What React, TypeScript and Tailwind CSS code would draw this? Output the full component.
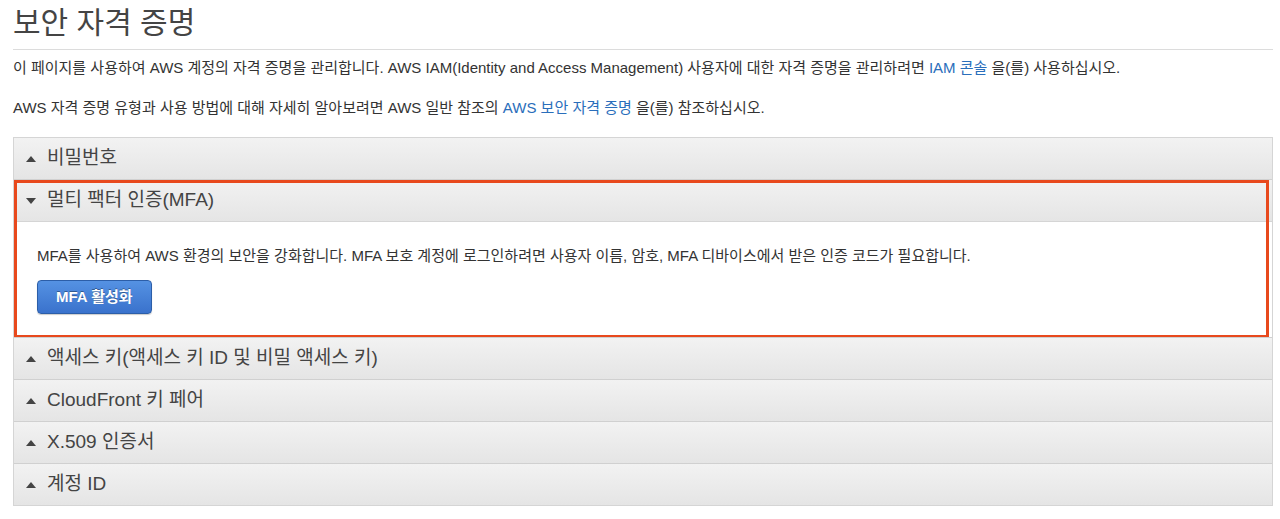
import { useState } from 'react';

const font = { fontFamily: '"Liberation Sans", "Noto Sans CJK KR", sans-serif' };

const sections = [
    { id: 'password', title: '비밀번호' },
    { id: 'mfa', title: '멀티 팩터 인증(MFA)' },
    { id: 'keys', title: '액세스 키(액세스 키 ID 및 비밀 액세스 키)' },
    { id: 'cloudfront', title: 'CloudFront 키 페어' },
    { id: 'x509', title: 'X.509 인증서' },
    { id: 'account', title: '계정 ID' },
];

function Caret({ open }: { open: boolean }) {
    return (
        <svg width="10" height="6" viewBox="0 0 10 6" className="shrink-0">
            {open ? (
                <polygon points="0,0 10,0 5,6" fill="#444" />
            ) : (
                <polygon points="0,6 10,6 5,0" fill="#444" />
            )}
        </svg>
    );
}

export default function App() {
    const [open, setOpen] = useState('mfa');

    return (
        <main className="bg-white px-[13px] pt-[3px] text-[#333] w-[1280px] h-[519px] overflow-hidden" style={font}>
            <h1 className="text-[30px] leading-[40px] text-[#444] font-normal">보안 자격 증명</h1>
            <div className="mt-[6px] border-t border-[#dcdcdc] mr-[-6px]" />

            <p className="mt-[8px] text-[15px] leading-[20px]">
                이 페이지를 사용하여 AWS 계정의 자격 증명을 관리합니다. AWS IAM(Identity and Access Management) 사용자에 대한 자격 증명을 관리하려면{' '}
                <a className="text-[#2a6ebb]">IAM 콘솔</a> 을(를) 사용하십시오.
            </p>
            <p className="mt-[20px] text-[15px] leading-[20px]">
                AWS 자격 증명 유형과 사용 방법에 대해 자세히 알아보려면 AWS 일반 참조의{' '}
                <a className="text-[#2a6ebb]">AWS 보안 자격 증명</a> 을(를) 참조하십시오.
            </p>

            {/* 아코디언 */}
            <div className="mt-[19px] border border-[#d5d5d5] mr-[-6px]">
                {sections.map((s, i) => {
                    const isOpen = open === s.id;
                    return (
                        <div
                            key={s.id}
                            className={`relative ${i > 0 ? 'border-t border-[#d0d0d0]' : ''}`}
                        >
                            <button
                                onClick={() => setOpen(isOpen ? '' : s.id)}
                                className="w-full h-[41px] flex items-center gap-[11px] pl-[12px] bg-gradient-to-b from-[#f2f2f2] to-[#e5e5e5] text-left text-[19px] text-[#444] cursor-pointer"
                            >
                                <Caret open={isOpen} />
                                <span>{s.title}</span>
                            </button>

                            {isOpen && s.id === 'mfa' && (
                                <div className="border-t border-[#d5d5d5] bg-white pl-[23px] pt-[24px] pb-[20px] h-[116px]">
                                    <p className="text-[15px] leading-[20px]">
                                        MFA를 사용하여 AWS 환경의 보안을 강화합니다. MFA 보호 계정에 로그인하려면 사용자 이름, 암호, MFA 디바이스에서 받은 인증 코드가 필요합니다.
                                    </p>
                                    <button className="mt-[14px] h-[34px] px-[18px] rounded-[4px] border border-[#2c5ea8] bg-gradient-to-b from-[#5592e3] to-[#3a72cc] text-white text-[15px] font-bold [text-shadow:0_-1px_0_rgba(0,0,0,0.35)] shadow-[0_1px_1px_rgba(0,0,0,0.2)]">
                                        MFA 활성화
                                    </button>
                                </div>
                            )}

                            {s.id === 'mfa' && (
                                <div className="absolute left-0 top-0 right-[3px] bottom-[-1px] border-[3px] border-[#e8491d] pointer-events-none" />
                            )}
                        </div>
                    );
                })}
            </div>
        </main>
    );
}
